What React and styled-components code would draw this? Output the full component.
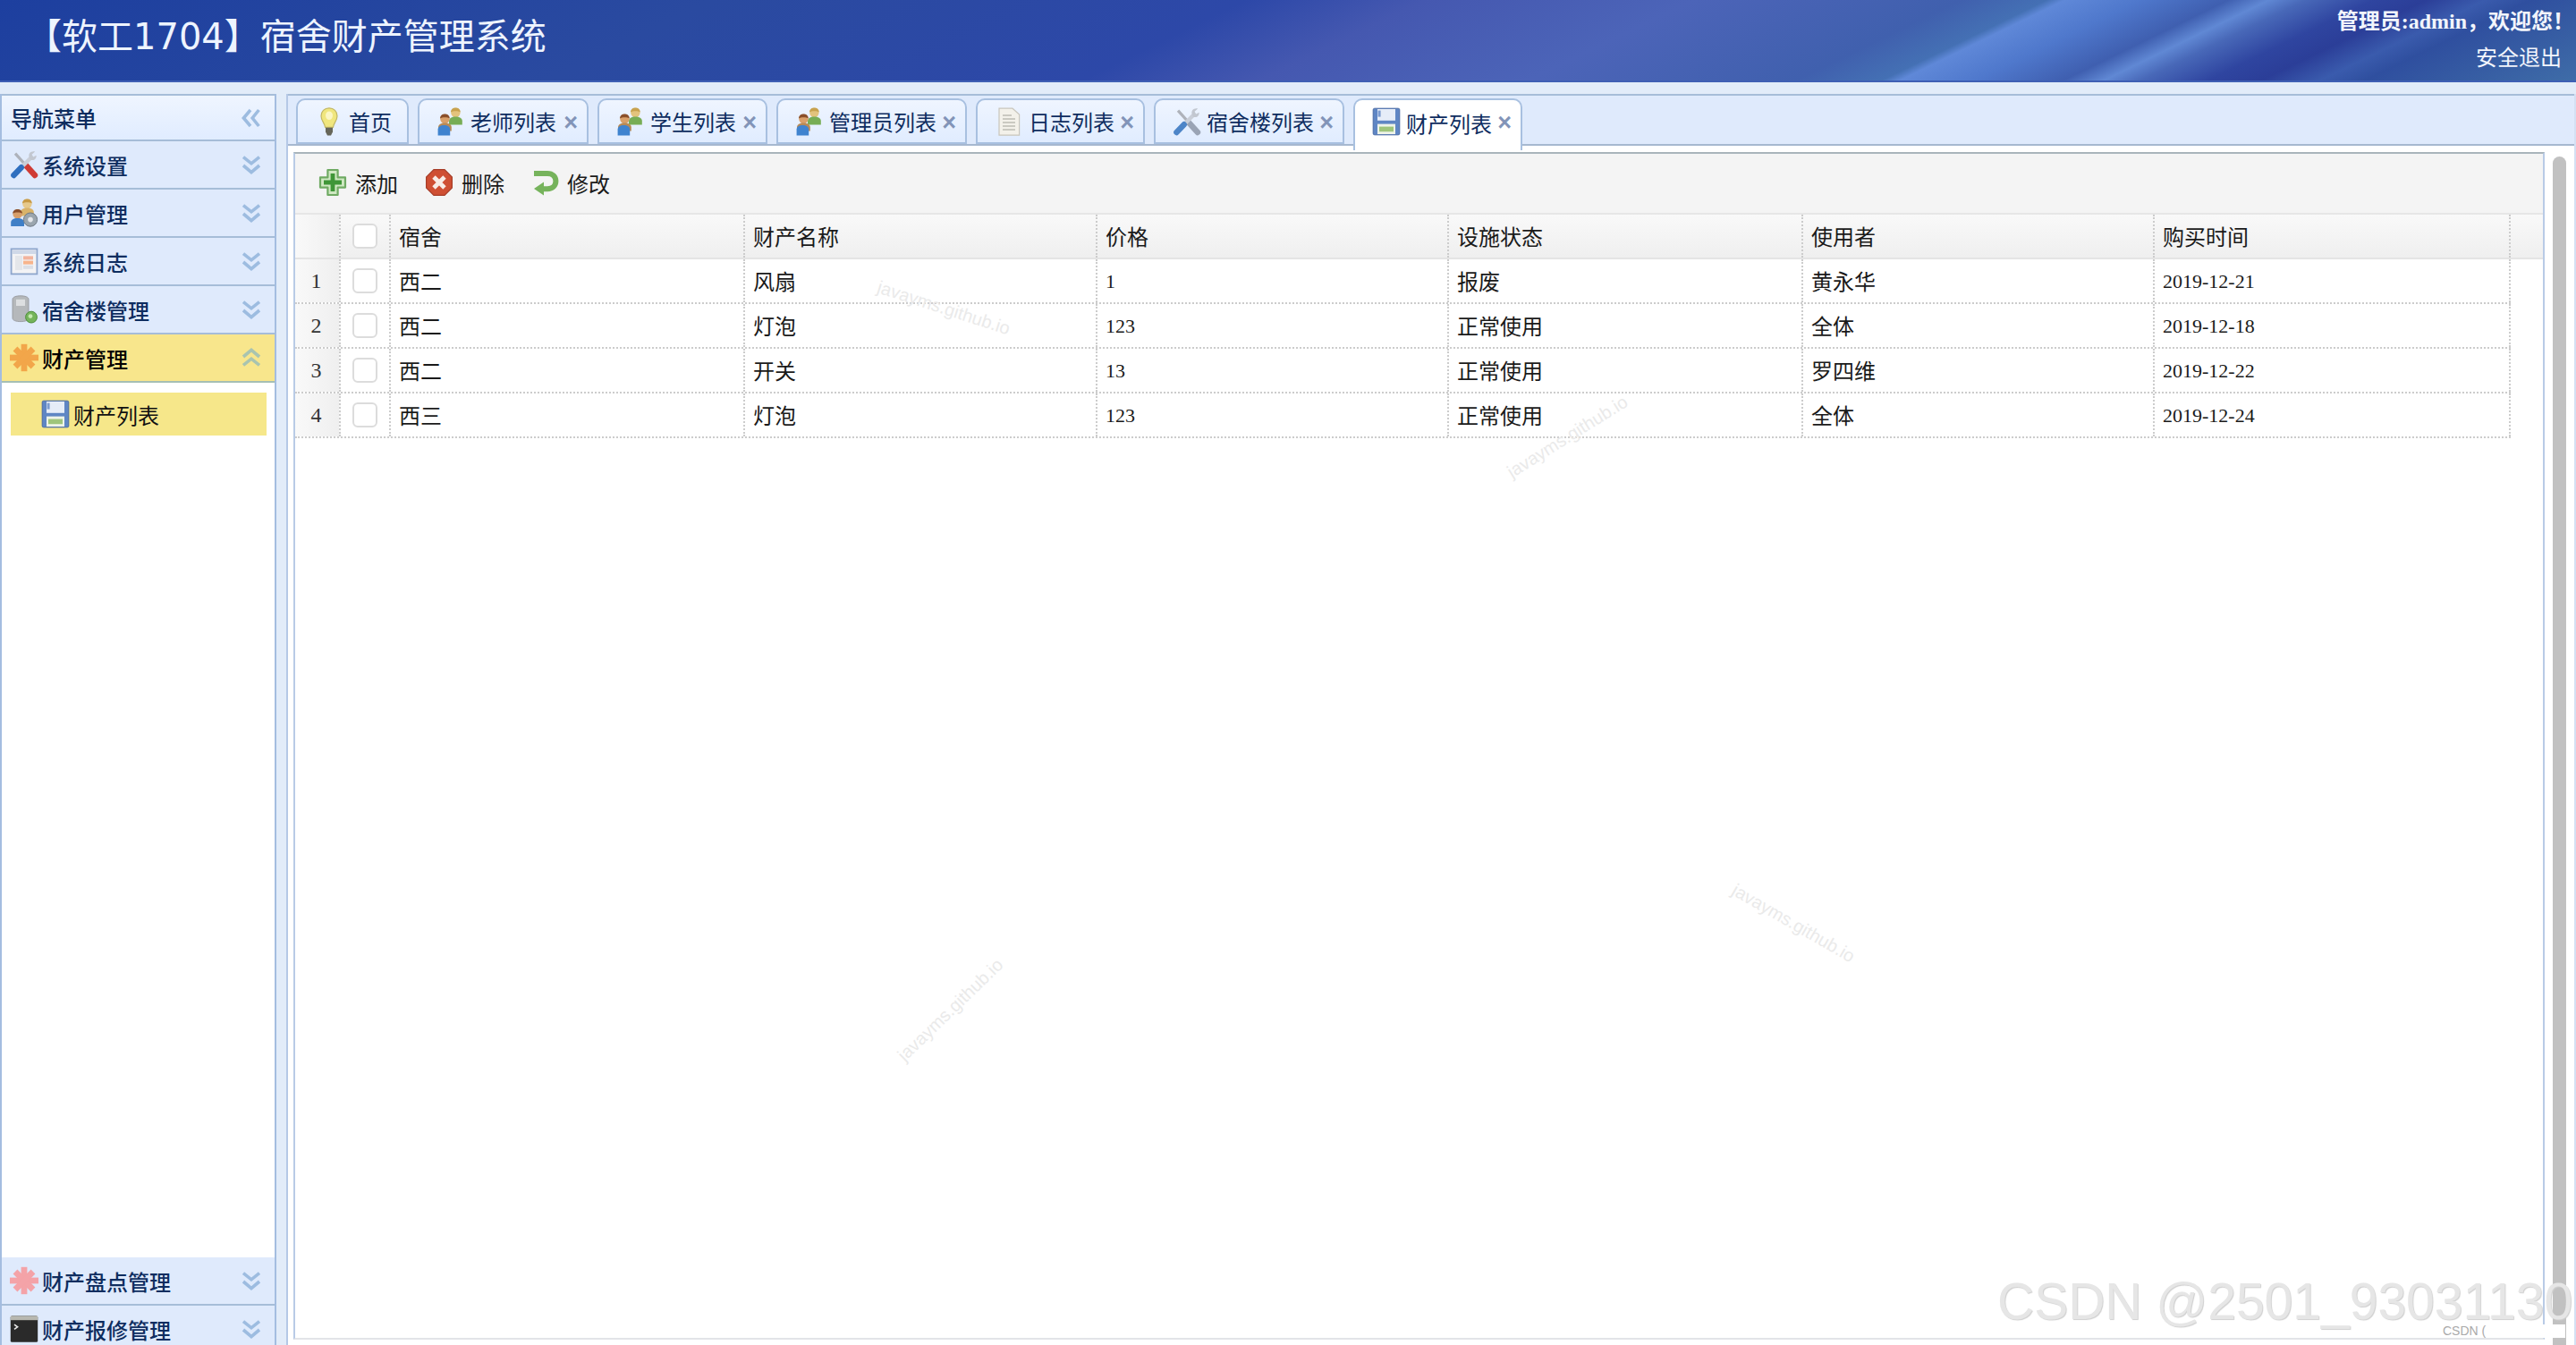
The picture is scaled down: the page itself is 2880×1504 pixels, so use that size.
import React from "react";
import styled, { createGlobalStyle } from "styled-components";

const GlobalStyle = createGlobalStyle`
  html, body {
    margin: 0;
    padding: 0;
    background: #e2ecf9;
    overflow: hidden;
  }
  body {
    font-family: "Liberation Serif", "Noto Sans CJK SC", serif;
  }
`;

const Page = styled.div`
  position: relative;
  width: 2880px;
  height: 1504px;
  display: flex;
  flex-direction: column;
  overflow: hidden;
  background: #e2ecf9;
`;

const Header = styled.header`
  height: 92px;
  flex: none;
  display: flex;
  justify-content: space-between;
  box-sizing: border-box;
  border-bottom: 2px solid #3f5fb4;
  background: linear-gradient(
    154deg,
    #1d3f9f 0,
    #2a4aa0 348px,
    #2d48a8 611px,
    #4558b0 698px,
    #4c64b8 830px,
    #4060ae 961px,
    #4470b4 1003px,
    #5f88d8 1012px,
    #4f78cc 1049px,
    #3f5fb0 1092px,
    #6088d4 1112px,
    #4868b8 1130px,
    #2f45a0 1163px,
    #2b3e98 1189px,
    #3a5bad 1218px,
    #2f4f9f 1240px,
    #3f6da8 1345px
  );
`;

const Title = styled.h1`
  margin: 0;
  padding: 15px 0 0 29px;
  font: 400 40px/52px "DejaVu Sans", "Noto Sans CJK SC", sans-serif;
  color: #eef4ff;
`;

const UserBox = styled.div`
  display: flex;
  flex-direction: column;
  align-items: flex-end;
  padding: 4px 2px 0 0;
  color: #f2f5fc;
  font-size: 24px;
  font-weight: 700;
  line-height: 41px;
`;

const Logout = styled.span`
  font-weight: 400;
  padding-right: 14px;
`;

const Body = styled.div`
  flex: 1;
  min-height: 0;
  display: flex;
  padding-top: 13px;
  gap: 11px;
`;

const Sidebar = styled.aside`
  width: 309px;
  height: 1409px;
  flex: none;
  display: flex;
  flex-direction: column;
  box-sizing: border-box;
  border-left: 2px solid #a4bde0;
  border-right: 2px solid #a4bde0;
  background: #fff;
`;

const NavTitle = styled.div`
  height: 53px;
  flex: none;
  display: flex;
  align-items: center;
  justify-content: space-between;
  box-sizing: border-box;
  padding: 0 14px 0 10px;
  border-top: 2px solid #a6bdd8;
  border-bottom: 2px solid #a6bdd8;
  background: linear-gradient(#eff5ff, #e0ecff);
  color: #0e2d5f;
  font-size: 24px;
  font-weight: 500;
`;

const AccordionHead = styled.div`
  height: 54px;
  flex: none;
  display: flex;
  align-items: center;
  gap: 4px;
  box-sizing: border-box;
  padding: 0 14px 0 9px;
  border-bottom: 2px solid ${(p) => (p.$open ? "#a5bfb4" : "#a6bdd8")};
  background: ${(p) => (p.$open ? "#f8e68c" : "#dfeafc")};
  color: ${(p) => (p.$open ? "#000" : "#0e2d5f")};
  font-size: 24px;
  font-weight: 500;
  svg:last-child {
    margin-left: auto;
  }
`;

const AccordionBody = styled.div`
  flex: 1;
  min-height: 0;
  padding: 11px 9px 0 10px;
  background: #fff;
`;

const TreeItem = styled.div`
  height: 48px;
  display: flex;
  align-items: center;
  gap: 4px;
  box-sizing: border-box;
  padding-left: 34px;
  background: #f6e78a;
  color: #111;
  font-size: 24px;
`;

const Main = styled.main`
  flex: 1;
  min-width: 0;
  display: flex;
  flex-direction: column;
  box-sizing: border-box;
  border-left: 2px solid #b5c8e6;
  border-right: 2px solid #d4e0f3;
`;

const TabBar = styled.div`
  height: 58px;
  flex: none;
  display: flex;
  align-items: flex-end;
  gap: 10px;
  box-sizing: border-box;
  padding-left: 9px;
  border-top: 2px solid #a6bdd8;
  border-bottom: 2px solid #a6b8d0;
  background: #dfeafc;
`;

const Tab = styled.div`
  position: relative;
  width: ${(p) => p.$width}px;
  height: ${(p) => (p.$active ? 58 : 51)}px;
  margin-bottom: ${(p) => (p.$active ? -7 : 0)}px;
  display: flex;
  align-items: ${(p) => (p.$active ? "flex-start" : "center")};
  padding-top: ${(p) => (p.$active ? 8 : 0)}px;
  gap: 6px;
  box-sizing: border-box;
  padding-left: 19px;
  border: 2px solid #a8c0e0;
  border-bottom: ${(p) => (p.$active ? "0" : "2px solid #a8c0e0")};
  border-radius: 10px 10px 0 0;
  background: ${(p) =>
    p.$active ? "#fff" : "linear-gradient(#eff5ff, #e0ecff)"};
  color: #0e2d5f;
  font-size: 24px;
  line-height: 32px;
`;

const TabLabel = styled.span`
  margin-top: 4px;
`;

const TabClose = styled.span`
  position: absolute;
  right: 10px;
  top: 13px;
  color: #8294b8;
  font: 700 27px/24px "Liberation Sans", sans-serif;
`;

const TabContent = styled.div`
  flex: 1;
  min-height: 0;
  display: flex;
  align-items: stretch;
  padding: 7px 0 6px 6px;
  background: #fff;
`;

const Datagrid = styled.section`
  position: relative;
  width: 2517px;
  flex: none;
  display: flex;
  flex-direction: column;
  box-sizing: border-box;
  border: 2px solid #b9cbe6;
  border-top-color: #a9b5bb;
  border-bottom: 2px solid #e2e4e8;
`;

const ScrollTrack = styled.div`
  flex: 1;
  padding: 5px 6px 0 9px;
`;

const ScrollThumb = styled.div`
  width: 15px;
  height: calc(100% + 8px);
  border-radius: 8px 8px 0 0;
  background: #c1c1c1;
`;

const Toolbar = styled.div`
  height: 68px;
  flex: none;
  display: flex;
  align-items: center;
  box-sizing: border-box;
  padding: 0 0 3px 26px;
  background: #f4f4f4;
  border-bottom: 2px solid #e6e6e6;
`;

const ToolButton = styled.div`
  display: flex;
  align-items: center;
  gap: 9px;
  margin-right: ${(p) => p.$gap}px;
  color: #1a1a1a;
  font-size: 24px;
`;

const ToolLabel = styled.span`
  padding-top: 2px;
`;

const columns = "51px 56px 396px 394px 393px 396px 393px 398px";

const GridRow = styled.div`
  display: grid;
  grid-template-columns: ${columns};
  height: 50px;
  flex: none;
  box-sizing: border-box;
  width: ${(p) => (p.$head ? "100%" : "2477px")};
  background: ${(p) => (p.$head ? "linear-gradient(#f9f9f9, #efefef)" : "#fff")};
  border-bottom: ${(p) => (p.$head ? "2px solid #e4e4e4" : "2px dotted #ccc")};
`;

const Cell = styled.div`
  display: flex;
  align-items: center;
  box-sizing: border-box;
  padding: ${(p) => (p.$num ? 1 : 4)}px 0 0 9px;
  border-right: 2px dotted #ccc;
  color: #1a1a1a;
  font-size: ${(p) => (p.$num ? 22 : 24)}px;
  line-height: 30px;
`;

const RowNum = styled.div`
  display: flex;
  align-items: center;
  justify-content: center;
  padding: 1px 2px 0 0;
  border-right: 2px dotted #ccc;
  background: linear-gradient(to right, #f9f9f9, #efefef);
  color: #333;
  font-size: 24px;
`;

const CheckCell = styled.div`
  display: flex;
  align-items: center;
  justify-content: center;
  border-right: 2px dotted #ccc;
`;

const Check = styled.span`
  width: 28px;
  height: 28px;
  box-sizing: border-box;
  border: 2px solid #dcdcdc;
  border-radius: 6px;
  background: #fff;
`;

const Trace = styled.span`
  position: absolute;
  left: ${(p) => p.$x}px;
  top: ${(p) => p.$y}px;
  transform: rotate(${(p) => p.$r}deg);
  color: #eaeaea;
  font: 400 20px/24px "Liberation Sans", sans-serif;
  white-space: nowrap;
  pointer-events: none;
`;

const BrandMark = styled.span`
  position: absolute;
  left: 2233px;
  top: 1430px;
  color: #e6e6e6;
  font: 400 57px/50px "Liberation Sans", sans-serif;
  text-shadow: 1px 1px 1px #cfcfcf;
  white-space: nowrap;
  pointer-events: none;
`;

const BrandTag = styled.span`
  position: absolute;
  left: 2731px;
  top: 1481px;
  width: 137px;
  height: 15px;
  background: #fff;
  color: #aaa;
  font: 400 14px/15px "Liberation Sans", sans-serif;
  white-space: nowrap;
  overflow: hidden;
`;

const IconBox = styled.svg.attrs({ viewBox: "0 0 16 16" })`
  width: 32px;
  height: 32px;
  flex: none;
`;

const Chevrons = ({ dir = "down", open }) => {
  const rot = dir === "up" ? 180 : dir === "left" ? 90 : 0;
  return (
    <svg width="24" height="24" viewBox="0 0 12 12" style={{ flex: "none" }}>
      <g
        transform={`rotate(${rot} 6 6)`}
        fill="none"
        stroke={open ? "#a9c4b0" : "#9dbce0"}
        strokeWidth="1.8"
      >
        <path d="M1.500 1.800 6 5.400l4.500-3.600" />
        <path d="M1.500 6.500 6 10.300l4.500-3.800" />
      </g>
    </svg>
  );
};

const Person = ({ x, y, body, skin, hair = "#a9773f" }) => (
  <g transform={`translate(${x} ${y})`}>
    <circle cx="3.700" cy="2.700" r="2.600" fill={skin} />
    <path d="M1 2.400C1.200.6 2.400 0 3.700 0s2.500.6 2.700 2.400C5.200 1.600 2.200 1.600 1 2.400z" fill={hair} />
    <path d="M0 9.500V7.300C0 6 1.500 5 3.700 5s3.700 1 3.700 2.300v2.200z" fill={body} />
  </g>
);

const BulbIcon = () => (
  <IconBox>
    <path d="M8 .4c2.700 0 4.500 2 4.500 4.500 0 2.500-1.900 3.700-2.300 6.300H5.800C5.400 8.600 3.500 7.400 3.500 4.900 3.500 2.400 5.300.4 8 .4z" fill="#f0e67e" stroke="#c2b765" strokeWidth=".6" />
    <path d="M6 4.500c0-1.500 1-2.300 2-2.300s2 .8 2 2.300S9 7 8 7 6 6 6 4.500z" fill="#fbf6c4" />
    <path d="M6 11.400h4v2.400l-1 1.900H7l-1-1.900z" fill="#66665a" />
  </IconBox>
);

const UsersIcon = () => (
  <IconBox>
    <Person x={7} y={0.3} body="#77ad55" skin="#e3c37d" hair="#c8a24e" />
    <Person x={1} y={3.800} body="#b98a55" skin="#d9a06a" hair="#8a4f2a" />
    <path d="M.8 15.700v-3.400c0-1.300 1.400-2.300 3.400-2.300s3.400 1 3.400 2.300v3.400z" fill="#3f83cf" />
  </IconBox>
);

const ToolsIcon = ({ tone = "red" }) => {
  const colored = tone === "red";
  return (
    <IconBox>
      <path d="M3 1.800 9.500 9" stroke="#aeb2ba" strokeWidth="1.600" />
      <path d="M9 8.500 14 14" stroke={colored ? "#cf3b35" : "#9aa4b5"} strokeWidth="3.200" strokeLinecap="round" />
      <path d="M12.600 3.400 6 10" stroke="#c9ced8" strokeWidth="2.200" />
      <path d="M10.800 3.600c-.6-1.900 1.200-3.500 3.300-2.900l-1.800 1.700.8 1.300 1.700-.8c.3 2-1.700 3.300-3.400 2.300z" fill="#c2c7d0" />
      <path d="M6.400 9.600 2.200 14" stroke={colored ? "#2f6fbf" : "#4d85c8"} strokeWidth="3.200" strokeLinecap="round" />
    </IconBox>
  );
};

const UserCogIcon = () => (
  <IconBox>
    <Person x={6} y={0.3} body="#d9b36a" skin="#e6c98c" hair="#c89a45" />
    <Person x={0.6} y={6} body="#3f7fc7" skin="#d89f6a" hair="#8a4f2a" />
    <circle cx="11.500" cy="11.800" r="3.800" fill="#9aa5ae" stroke="#6f7a85" strokeWidth=".5" />
    <circle cx="11.500" cy="11.800" r="1.400" fill="#e3e6ea" />
  </IconBox>
);

const LogIcon = () => (
  <IconBox>
    <rect x=".8" y="1.200" width="14.400" height="14" fill="#f3f3f5" stroke="#8ea6cc" strokeWidth=".9" />
    <rect x="1.500" y="2" width="13" height="2" fill="#cfd8e8" />
    <rect x="3" y="5" width="4" height="8" fill="#e4e6ea" />
    <rect x="7.500" y="5.200" width="5.500" height="2" fill="#f2b49e" />
    <rect x="7.500" y="7.800" width="5.500" height="2" fill="#f7b48c" />
    <rect x="7.500" y="10.400" width="5.500" height="2" fill="#dbdfe6" />
  </IconBox>
);

const ServerIcon = () => (
  <IconBox>
    <path d="M1.500 2.400C1.500 1 3.500.4 6 .4s4.500.6 4.500 2v10.400c0 1.400-2 2-4.500 2s-4.500-.6-4.500-2z" fill="#b5b8bb" stroke="#909397" strokeWidth=".4" />
    <rect x="3.500" y="2.400" width="5" height="3.600" fill="#dcdee0" />
    <circle cx="12" cy="12.300" r="3.200" fill="#74b45a" stroke="#4f8e3c" strokeWidth=".5" />
    <circle cx="11.500" cy="11.800" r="1.200" fill="#c5e8b0" />
  </IconBox>
);

const StarIcon = ({ color }) => (
  <IconBox>
    <g stroke={color} strokeWidth="3.400">
      <path d="M8 .4v15.200" />
      <path d="M0 8h16" />
      <path d="M3 3l10 10" />
      <path d="M13 3 3 13" />
    </g>
  </IconBox>
);

const SaveIcon = () => (
  <IconBox>
    <rect x=".6" y=".6" width="14.800" height="14.800" rx=".8" fill="#5f86c4" stroke="#4a6ba5" strokeWidth=".5" />
    <rect x="3" y="1" width="10" height="6.400" fill="#e6edf8" />
    <rect x="3.300" y="1.800" width="1.500" height="3.500" fill="#7b9bd0" />
    <rect x="3" y="9.300" width="10" height="5.700" fill="#eef3e8" />
    <rect x="4" y="10.800" width="8" height="2.800" fill="#9fc57c" />
  </IconBox>
);

const TerminalIcon = () => (
  <IconBox>
    <rect x=".4" y=".8" width="15.200" height="14.600" rx=".8" fill="#2a2a2a" />
    <rect x=".4" y=".8" width="15.200" height="2.300" fill="#b8b8b0" />
    <path d="M2.500 5.600l1.800 1.300-1.800 1.300" fill="none" stroke="#e8e8e8" strokeWidth=".8" />
  </IconBox>
);

const AddIcon = () => (
  <IconBox>
    <path d="M5.200 1h5.600v4.200H15v5.600h-4.200V15H5.200v-4.200H1V5.200h4.200z" fill="#cfe8c2" stroke="#6faa63" strokeWidth="1.100" strokeLinejoin="round" />
    <path d="M6.800 3h2.400v3.800H13v2.400H9.200V13H6.800V9.200H3V6.800h3.800z" fill="#3f9638" />
  </IconBox>
);

const CancelIcon = () => (
  <IconBox>
    <path d="M5 .8h6L15.200 5v6L11 15.200H5L.8 11V5z" fill="#cf4f33" stroke="#a63d28" strokeWidth=".6" />
    <path d="M5 5l6 6M11 5l-6 6" stroke="#f8ece6" strokeWidth="2.400" />
  </IconBox>
);

const RedoIcon = () => (
  <IconBox>
    <path d="M2 3h7.500c3 0 4.700 1.900 4.700 4.300S12.500 11.600 9.500 11.600H7" fill="none" stroke="#76b35c" strokeWidth="3" />
    <path d="M7.500 7.800v7.400L2 11.500z" fill="#76b35c" />
  </IconBox>
);

const FileIcon = () => (
  <IconBox>
    <path d="M2.500.6h7.500L13.800 4v11.600H2.500z" fill="#f3f1ea" stroke="#c9c6bc" strokeWidth=".6" />
    <path d="M4.500 4.500h5M4.500 6.500h7M4.500 8.500h7M4.500 10.500h7M4.500 12.500h7" stroke="#bdbcb4" strokeWidth=".7" />
  </IconBox>
);

const tabs = [
  { label: "首页", icon: <BulbIcon />, width: 126 },
  { label: "老师列表", icon: <UsersIcon />, width: 191, close: true },
  { label: "学生列表", icon: <UsersIcon />, width: 190, close: true },
  { label: "管理员列表", icon: <UsersIcon />, width: 213, close: true },
  { label: "日志列表", icon: <FileIcon />, width: 189, close: true },
  { label: "宿舍楼列表", icon: <ToolsIcon tone="grey" />, width: 213, close: true },
  { label: "财产列表", icon: <SaveIcon />, width: 189, close: true, active: true },
];

const rows = [
  ["西二", "风扇", "1", "报废", "黄永华", "2019-12-21"],
  ["西二", "灯泡", "123", "正常使用", "全体", "2019-12-18"],
  ["西二", "开关", "13", "正常使用", "罗四维", "2019-12-22"],
  ["西三", "灯泡", "123", "正常使用", "全体", "2019-12-24"],
];

const heads = ["宿舍", "财产名称", "价格", "设施状态", "使用者", "购买时间"];

export default function App() {
  return (
    <Page>
      <GlobalStyle />
      <Header>
        <Title>【软工1704】宿舍财产管理系统</Title>
        <UserBox>
          <span>管理员:admin，欢迎您！</span>
          <Logout>安全退出</Logout>
        </UserBox>
      </Header>
      <Body>
        <Sidebar>
          <NavTitle>
            导航菜单
            <Chevrons dir="left" />
          </NavTitle>
          <AccordionHead><ToolsIcon />系统设置<Chevrons /></AccordionHead>
          <AccordionHead><UserCogIcon />用户管理<Chevrons /></AccordionHead>
          <AccordionHead><LogIcon />系统日志<Chevrons /></AccordionHead>
          <AccordionHead><ServerIcon />宿舍楼管理<Chevrons /></AccordionHead>
          <AccordionHead $open><StarIcon color="#f2a64a" />财产管理<Chevrons dir="up" open /></AccordionHead>
          <AccordionBody>
            <TreeItem><SaveIcon />财产列表</TreeItem>
          </AccordionBody>
          <AccordionHead><StarIcon color="#f4a3a8" />财产盘点管理<Chevrons /></AccordionHead>
          <AccordionHead><TerminalIcon />财产报修管理<Chevrons /></AccordionHead>
        </Sidebar>
        <Main>
          <TabBar>
            {tabs.map((t) => (
              <Tab key={t.label} $width={t.width} $active={t.active}>
                {t.icon}
                <TabLabel>{t.label}</TabLabel>
                {t.close && <TabClose>×</TabClose>}
              </Tab>
            ))}
          </TabBar>
          <TabContent>
            <Datagrid>
              <Toolbar>
                <ToolButton $gap={30}><AddIcon /><ToolLabel>添加</ToolLabel></ToolButton>
                <ToolButton $gap={29}><CancelIcon /><ToolLabel>删除</ToolLabel></ToolButton>
                <ToolButton $gap={0}><RedoIcon /><ToolLabel>修改</ToolLabel></ToolButton>
              </Toolbar>
              <GridRow $head>
                <RowNum />
                <CheckCell><Check /></CheckCell>
                {heads.map((h) => (
                  <Cell key={h}>{h}</Cell>
                ))}
              </GridRow>
              {rows.map((r, i) => (
                <GridRow key={i}>
                  <RowNum>{i + 1}</RowNum>
                  <CheckCell><Check /></CheckCell>
                  {r.map((v, j) => (
                    <Cell key={j} $num={/^[0-9-]+$/.test(v)}>{v}</Cell>
                  ))}
                </GridRow>
              ))}
              <Trace $x={648} $y={160} $r={18}>javayms.github.io</Trace>
              <Trace $x={1345} $y={304} $r={-32}>javayms.github.io</Trace>
              <Trace $x={1598} $y={848} $r={30}>javayms.github.io</Trace>
              <Trace $x={655} $y={945} $r={-44}>javayms.github.io</Trace>
            </Datagrid>
            <ScrollTrack><ScrollThumb /></ScrollTrack>
          </TabContent>
        </Main>
      </Body>
      <BrandMark>CSDN @2501_93031130</BrandMark>
      <BrandTag>CSDN (</BrandTag>
    </Page>
  );
}
